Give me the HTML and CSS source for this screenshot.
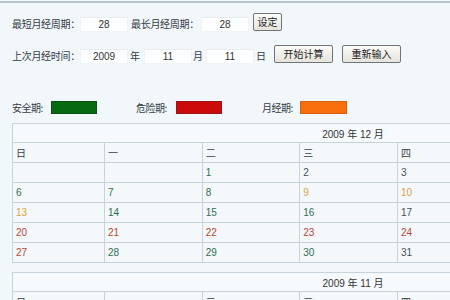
FILE: index.html
```html
<!DOCTYPE html>
<html lang="zh-CN">

<head>
    <meta charset="UTF-8">
    <title>安全期计算</title>
    <link rel="stylesheet" href="styles.css">
</head>

<body>
    <div class="topline"></div>
    <form id="calcForm" class="form">
        <div class="row row-first">
            <span class="lbl">最短月经周期：</span>
            <input type="text" class="field" id="minCycle" value="28" />
            <span class="lbl lbl-second">最长月经周期：</span>
            <input type="text" class="field" id="maxCycle" value="28" />
            <button type="button" class="btn btn-set">设定</button>
        </div>
        <div class="row row-second">
            <span class="lbl">上次月经时间：</span>
            <input type="text" class="field" id="year" value="2009" />
            <span class="unit">年</span>
            <input type="text" class="field field-month" id="month" value="11" />
            <span class="unit unit-month">月</span>
            <input type="text" class="field field-day" id="day" value="11" />
            <span class="unit">日</span>
            <button type="button" class="btn btn-calc">开始计算</button>
            <button type="reset" class="btn btn-reset">重新输入</button>
        </div>
    </form>

    <div class="legend">
        <span class="legend-lbl lbl-safe">安全期:</span>
        <span class="swatch safe"></span>
        <span class="legend-lbl lbl-danger">危险期:</span>
        <span class="swatch danger"></span>
        <span class="legend-lbl lbl-period">月经期:</span>
        <span class="swatch period"></span>
    </div>

    <table class="month">
        <colgroup>
            <col class="col-sun"><col span="6">
        </colgroup>
        <thead>
            <tr>
                <th colspan="7" class="title">2009 年 12 月</th>
            </tr>
            <tr class="week">
                <td>日</td><td>一</td><td>二</td><td>三</td><td>四</td><td>五</td><td>六</td>
            </tr>
        </thead>
        <tbody>
            <tr>
                <td></td><td></td><td class="s">1</td><td class="n">2</td><td class="n">3</td><td class="s">4</td><td class="s">5</td>
            </tr>
            <tr>
                <td class="s">6</td><td class="s">7</td><td class="s">8</td><td class="p">9</td><td class="p">10</td><td class="p">11</td><td class="p">12</td>
            </tr>
            <tr>
                <td class="p">13</td><td class="s">14</td><td class="s">15</td><td class="s">16</td><td class="n">17</td><td class="d">18</td><td class="d">19</td>
            </tr>
            <tr>
                <td class="d">20</td><td class="d">21</td><td class="d">22</td><td class="d">23</td><td class="d">24</td><td class="d">25</td><td class="d">26</td>
            </tr>
            <tr>
                <td class="d">27</td><td class="s">28</td><td class="s">29</td><td class="s">30</td><td class="n">31</td><td></td><td></td>
            </tr>
        </tbody>
    </table>

    <table class="month">
        <colgroup>
            <col class="col-sun"><col span="6">
        </colgroup>
        <thead>
            <tr>
                <th colspan="7" class="title">2009 年 11 月</th>
            </tr>
            <tr class="week">
                <td>日</td><td>一</td><td>二</td><td>三</td><td>四</td><td>五</td><td>六</td>
            </tr>
        </thead>
        <tbody>
            <tr>
                <td class="s">1</td><td class="s">2</td><td class="s">3</td><td class="s">4</td><td class="s">5</td><td class="s">6</td><td class="s">7</td>
            </tr>
            <tr>
                <td class="s">8</td><td class="s">9</td><td class="s">10</td><td class="p">11</td><td class="p">12</td><td class="p">13</td><td class="p">14</td>
            </tr>
        </tbody>
    </table>
</body>

</html>
```

FILE: styles.css
```css
html,
body {
    overflow: hidden;
}

body {
    margin: 0;
    padding-top: 1px;
    background-color: #f2f7fb;
    font-family: "Liberation Sans", "Noto Sans CJK SC", sans-serif;
    font-size: 10px;
    color: #333c44;
}

.topline {
    border-top: 2px solid #b4c5cc;
}

.form {
    margin: 0;
    padding: 10px 0 0 12px;
}

.row {
    display: flex;
    align-items: center;
    height: 20px;
    white-space: nowrap;
}

.row-second {
    margin-top: 12px;
}

.lbl {
    width: 68px;
    font-family: "Noto Sans CJK SC", sans-serif;
    font-size: 10px;
    letter-spacing: -0.3px;
}

.lbl-second {
    width: 70px;
    margin-left: 3px;
}

.field {
    width: 48px;
    height: 15px;
    box-sizing: border-box;
    padding: 0;
    margin: 2px 0 0 0;
    border: 1px solid #f0f4f7;
    border-top-color: #e6ecf0;
    background-color: #fdfeff;
    font-family: "Liberation Sans", sans-serif;
    font-size: 10px;
    color: #333;
    text-align: center;
    outline: none;
}

.unit {
    width: 10px;
    margin-left: 2px;
    font-family: "Noto Sans CJK SC", sans-serif;
}

.field-month {
    margin-left: 4px;
}

.unit-month {
    margin-left: 1px;
}

.field-day {
    margin-left: 3px;
}

.btn {
    height: 18px;
    padding: 0;
    box-sizing: border-box;
    border: 1px solid #6f7479;
    border-radius: 2px;
    background: linear-gradient(to bottom, #fbfbf8, #e6e4dc);
    font-family: "Noto Sans CJK SC", sans-serif;
    font-size: 10px;
    color: #222;
    line-height: 14px;
    cursor: pointer;
}

.btn-set {
    width: 29px;
    margin: -2px 0 0 4px;
}

.btn-calc {
    width: 59px;
    margin: -2px 0 0 8px;
}

.btn-reset {
    width: 59px;
    margin: -2px 0 0 9px;
}

.legend {
    display: flex;
    align-items: center;
    height: 14px;
    margin: 35px 0 0 12px;
    white-space: nowrap;
    font-family: "Noto Sans CJK SC", sans-serif;
}

.legend-lbl {
    letter-spacing: -0.5px;
}

.lbl-safe {
    width: 39px;
}

.lbl-danger {
    width: 40px;
    margin-left: 39px;
}

.lbl-period {
    width: 38px;
    margin-left: 40px;
}

.swatch {
    width: 46px;
    height: 13px;
    box-sizing: border-box;
}

.safe {
    background-color: #066a10;
    border: 1px solid #0b4f12;
}

.danger {
    background-color: #cc0a0a;
    border: 1px solid #9c1414;
}

.period {
    width: 47px;
    background-color: #f76e0c;
    border: 1px solid #d8600e;
}

.month {
    width: 679px;
    margin: 9px 0 0 12px;
    border-collapse: collapse;
    table-layout: fixed;
    background-color: #f4f8fb;
}

.month+.month {
    margin-top: 9px;
}

.col-sun {
    width: 92px;
}

.month th,
.month td {
    height: 19px;
    padding: 0 0 0 3px;
    border: 1px solid #c7d3db;
    text-align: left;
    font-weight: normal;
    vertical-align: middle;
}

.month .title {
    height: 18px;
    text-align: center;
    background-color: #f7fafc;
    color: #333;
}

.week td {
    font-family: "Noto Sans CJK SC", sans-serif;
    color: #3a4148;
}

.s {
    color: #2f6e52;
}

.n {
    color: #45505a;
}

.p {
    color: #dba240;
}

.d {
    color: #b8452f;
}
```
